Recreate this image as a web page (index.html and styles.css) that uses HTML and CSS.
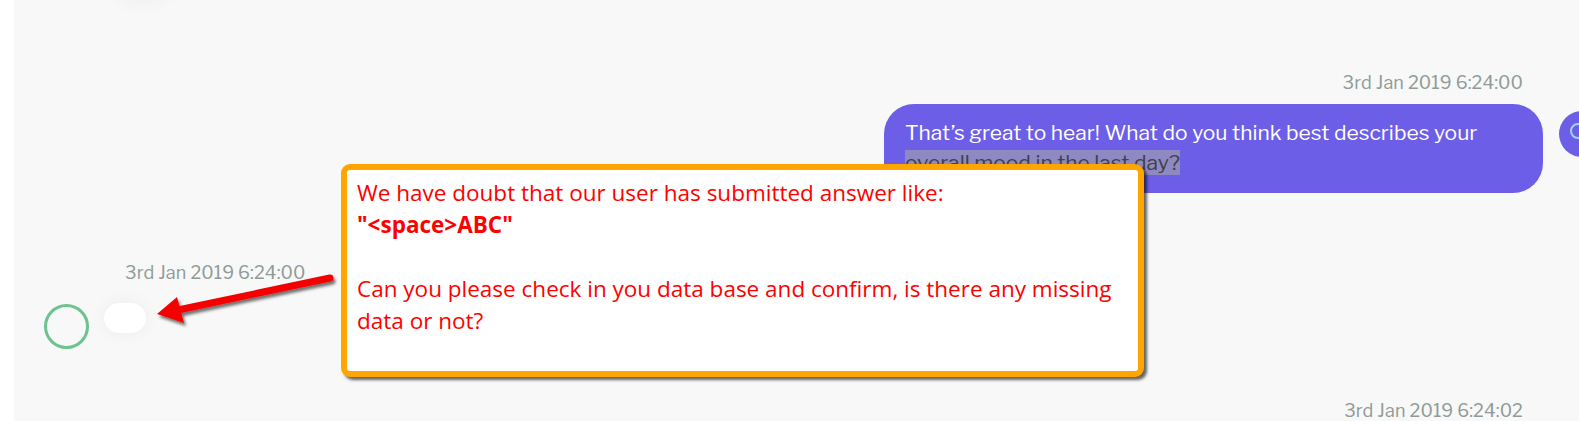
FILE: index.html
```html
<!DOCTYPE html>
<html lang="en">
<head>
<meta charset="utf-8">
<title>Chat</title>
<link rel="stylesheet" href="styles.css">
</head>
<body>
<div class="app">
  <div class="gutter"></div>
  <main class="chat">
    <div class="msg msg-top"><div class="ghost"></div></div>

    <div class="msg msg-out">
      <div class="time time-out">3rd Jan 2019 6:24:00</div>
      <div class="row row-out">
        <div class="bubble">That’s great to hear! What do you think best describes your <span class="sel">overall mood in the last day?</span></div>
        <div class="avatar avatar-bot">
          <svg width="46" height="46" viewBox="0 0 46 46"><circle cx="19" cy="20" r="7" fill="none" stroke="#9fd3f5" stroke-width="2"/></svg>
        </div>
      </div>
    </div>

    <div class="msg msg-in">
      <div class="time time-in">3rd Jan 2019 6:24:00</div>
      <div class="row row-in">
        <div class="avatar avatar-user"></div>
        <div class="empty"></div>
      </div>
    </div>

    <div class="msg msg-out">
      <div class="time time-out time-last">3rd Jan 2019 6:24:02</div>
    </div>
  </main>

  <div class="callout">
    <p>We have doubt that our user has submitted answer like:<br><b>"&lt;space&gt;ABC"</b></p>
    <p>Can you please check in you data base and confirm, is there any missing data or not?</p>
  </div>

  <svg class="arrow" width="1579" height="421" viewBox="0 0 1579 421">
    <defs>
      <filter id="sh" x="-20%" y="-50%" width="140%" height="200%">
        <feDropShadow dx="2" dy="3" stdDeviation="1.5" flood-color="#000" flood-opacity="0.55"/>
      </filter>
    </defs>
    <g filter="url(#sh)">
      <line x1="330" y1="278" x2="178" y2="310" stroke="#f40000" stroke-width="7" stroke-linecap="round"/>
      <polygon points="157,314 177,297 184,323" fill="#f40000"/>
    </g>
  </svg>
</div>
</body>
</html>
```

FILE: styles.css
```css
* { box-sizing: border-box; }
html, body { margin: 0; padding: 0; }
body { background: #fff; overflow: hidden; }

.app {
  position: relative;
  display: flex;
  width: 1579px;
  height: 421px;
  overflow: hidden;
}
.gutter { width: 14px; flex: none; background: #fff; }

.chat {
  flex: 1;
  display: flex;
  flex-direction: column;
  background: #f8f8f8;
  font-family: "Libre Franklin", "Lato", sans-serif;
}

.msg-top { height: 2px; position: relative; }
.ghost {
  position: absolute;
  left: 104px;
  bottom: 0;
  width: 50px;
  height: 30px;
  border-radius: 15px;
  background: #fff;
  box-shadow: 0 0 20px rgba(0, 0, 0, 0.05);
}

.time {
  font-size: 18px;
  line-height: 22px;
  color: #8e9b97;
  letter-spacing: 0.1px;
}
.msg-out { display: flex; flex-direction: column; align-items: flex-end; }
.time-out { margin-top: 72px; margin-right: 56px; }
.time-last { margin-top: 51px; }

.row { display: flex; }
.row-out { margin-top: 10px; margin-right: -26px; align-items: flex-start; }

.bubble {
  width: 659px;
  padding: 14px 21px 15px;
  background: #6c5ee6;
  color: #fff;
  border-radius: 30px;
  font-size: 21px;
  line-height: 30px;
}
.sel { background: #8f89c1; color: #3f3f4a; }

.avatar {
  width: 46px;
  height: 46px;
  border-radius: 50%;
  flex: none;
}
.avatar-bot { background: #6c5ee6; margin-left: 16px; margin-top: 7px; }
.avatar-bot svg { display: block; }

.msg-in { display: flex; flex-direction: column; }
.time-in { margin-top: 69px; margin-left: 111px; }
.row-in { margin-top: 19px; margin-left: 30px; align-items: flex-start; }
.avatar-user {
  width: 45px;
  height: 45px;
  border: 3px solid #6cc38f;
  margin-top: 1px;
}
.empty {
  width: 42px;
  height: 30px;
  margin-left: 15px;
  border-radius: 15px;
  background: #fff;
  box-shadow: 0 0 18px rgba(0, 0, 0, 0.05);
}

.callout {
  position: absolute;
  left: 341px;
  top: 164px;
  width: 803px;
  height: 213px;
  padding: 7px 10px;
  background: #fff;
  border: 6px solid #ffa500;
  border-radius: 9px;
  box-shadow: 3px 3px 3px rgba(0, 0, 0, 0.6);
  color: #ff0000;
  font-family: "Open Sans", "Noto Sans", sans-serif;
  font-size: 22.5px;
  line-height: 32px;
}
.callout p { margin: 0 0 32px; }
.callout b { font-weight: 700; }

.arrow {
  position: absolute;
  left: 0;
  top: 0;
  pointer-events: none;
}
```
